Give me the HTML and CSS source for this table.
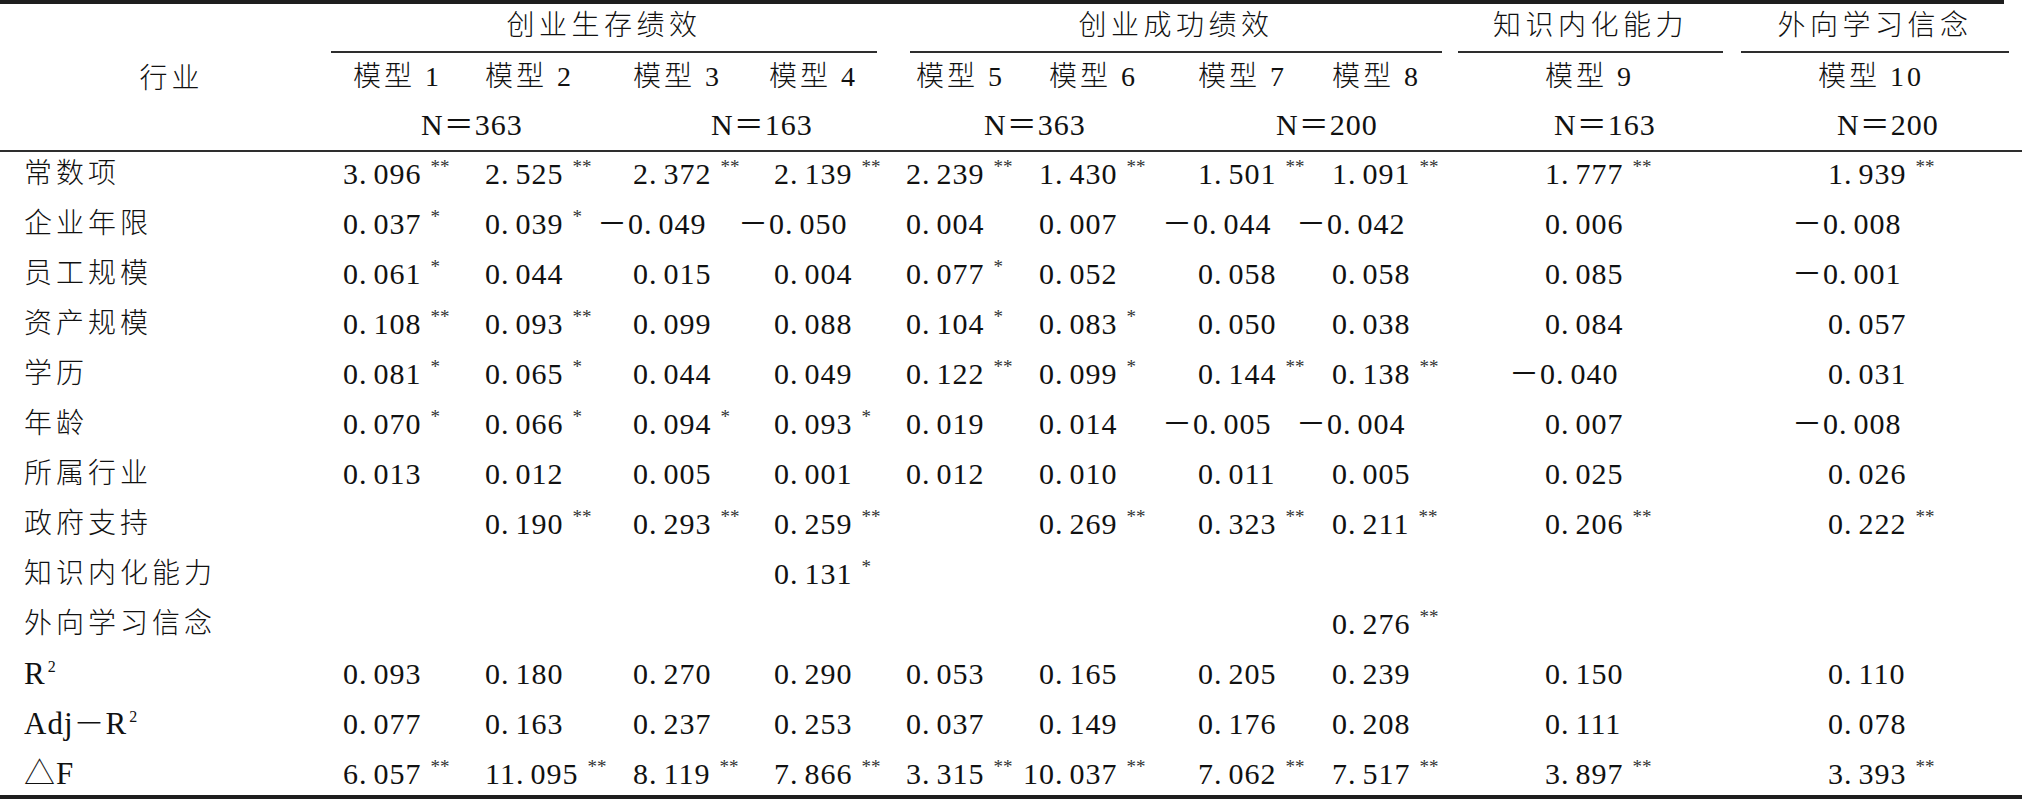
FILE: index.html
```html
<!DOCTYPE html>
<html lang="zh-CN">
<head>
<meta charset="utf-8">
<title>回归分析结果</title>
<link rel="stylesheet" href="styles.css">
</head>
<body>
<div class="sheet">
<table class="reg">
  <colgroup>
    <col class="w-lab"><col class="w1"><col class="w2"><col class="w3"><col class="w4"><col class="w5"><col class="w6"><col class="w7"><col class="w8"><col class="w9"><col class="w10">
  </colgroup>
  <thead>
    <tr class="r-grp">
      <th rowspan="3" class="head-lab">行业</th>
      <th colspan="4"><div class="gl g1">创业生存绩效</div></th>
      <th colspan="4"><div class="gl g2">创业成功绩效</div></th>
      <th><div class="gl g3">知识内化能力</div></th>
      <th><div class="gl g4">外向学习信念</div></th>
    </tr>
    <tr class="r-mdl">
      <th class="in-r">模型 1</th>
      <th>模型 2</th>
      <th>模型 3</th>
      <th class="in-l5">模型 4</th>
      <th class="in-r">模型 5</th>
      <th class="in-r">模型 6</th>
      <th>模型 7</th>
      <th>模型 8</th>
      <th>模型 9</th>
      <th class="in-l">模型 10</th>
    </tr>
    <tr class="r-n">
      <th colspan="2" class="n2">N＝363</th>
      <th colspan="2" class="n2">N＝163</th>
      <th colspan="2" class="n2">N＝363</th>
      <th colspan="2" class="n2">N＝200</th>
      <th class="n1">N＝163</th>
      <th class="n1">N＝200</th>
    </tr>
  </thead>
  <tbody>
    <tr>
      <td class="lab">常数项</td>
      <td>3<span class="dp">.</span>096<sup>**</sup></td><td>2<span class="dp">.</span>525<sup>**</sup></td><td>2<span class="dp">.</span>372<sup>**</sup></td><td>2<span class="dp">.</span>139<sup>**</sup></td>
      <td>2<span class="dp">.</span>239<sup>**</sup></td><td>1<span class="dp">.</span>430<sup>**</sup></td><td>1<span class="dp">.</span>501<sup>**</sup></td><td>1<span class="dp">.</span>091<sup>**</sup></td>
      <td>1<span class="dp">.</span>777<sup>**</sup></td><td>1<span class="dp">.</span>939<sup>**</sup></td>
    </tr>
    <tr>
      <td class="lab">企业年限</td>
      <td>0<span class="dp">.</span>037<sup>*</sup></td><td>0<span class="dp">.</span>039<sup>*</sup></td><td class="neg">－0<span class="dp">.</span>049</td><td class="neg">－0<span class="dp">.</span>050</td>
      <td>0<span class="dp">.</span>004</td><td>0<span class="dp">.</span>007</td><td class="neg">－0<span class="dp">.</span>044</td><td class="neg">－0<span class="dp">.</span>042</td>
      <td>0<span class="dp">.</span>006</td><td class="neg">－0<span class="dp">.</span>008</td>
    </tr>
    <tr>
      <td class="lab">员工规模</td>
      <td>0<span class="dp">.</span>061<sup>*</sup></td><td>0<span class="dp">.</span>044</td><td>0<span class="dp">.</span>015</td><td>0<span class="dp">.</span>004</td>
      <td>0<span class="dp">.</span>077<sup>*</sup></td><td>0<span class="dp">.</span>052</td><td>0<span class="dp">.</span>058</td><td>0<span class="dp">.</span>058</td>
      <td>0<span class="dp">.</span>085</td><td class="neg">－0<span class="dp">.</span>001</td>
    </tr>
    <tr>
      <td class="lab">资产规模</td>
      <td>0<span class="dp">.</span>108<sup>**</sup></td><td>0<span class="dp">.</span>093<sup>**</sup></td><td>0<span class="dp">.</span>099</td><td>0<span class="dp">.</span>088</td>
      <td>0<span class="dp">.</span>104<sup>*</sup></td><td>0<span class="dp">.</span>083<sup>*</sup></td><td>0<span class="dp">.</span>050</td><td>0<span class="dp">.</span>038</td>
      <td>0<span class="dp">.</span>084</td><td>0<span class="dp">.</span>057</td>
    </tr>
    <tr>
      <td class="lab">学历</td>
      <td>0<span class="dp">.</span>081<sup>*</sup></td><td>0<span class="dp">.</span>065<sup>*</sup></td><td>0<span class="dp">.</span>044</td><td>0<span class="dp">.</span>049</td>
      <td>0<span class="dp">.</span>122<sup>**</sup></td><td>0<span class="dp">.</span>099<sup>*</sup></td><td>0<span class="dp">.</span>144<sup>**</sup></td><td>0<span class="dp">.</span>138<sup>**</sup></td>
      <td class="neg">－0<span class="dp">.</span>040</td><td>0<span class="dp">.</span>031</td>
    </tr>
    <tr>
      <td class="lab">年龄</td>
      <td>0<span class="dp">.</span>070<sup>*</sup></td><td>0<span class="dp">.</span>066<sup>*</sup></td><td>0<span class="dp">.</span>094<sup>*</sup></td><td>0<span class="dp">.</span>093<sup>*</sup></td>
      <td>0<span class="dp">.</span>019</td><td>0<span class="dp">.</span>014</td><td class="neg">－0<span class="dp">.</span>005</td><td class="neg">－0<span class="dp">.</span>004</td>
      <td>0<span class="dp">.</span>007</td><td class="neg">－0<span class="dp">.</span>008</td>
    </tr>
    <tr>
      <td class="lab">所属行业</td>
      <td>0<span class="dp">.</span>013</td><td>0<span class="dp">.</span>012</td><td>0<span class="dp">.</span>005</td><td>0<span class="dp">.</span>001</td>
      <td>0<span class="dp">.</span>012</td><td>0<span class="dp">.</span>010</td><td>0<span class="dp">.</span>011</td><td>0<span class="dp">.</span>005</td>
      <td>0<span class="dp">.</span>025</td><td>0<span class="dp">.</span>026</td>
    </tr>
    <tr>
      <td class="lab">政府支持</td>
      <td></td><td>0<span class="dp">.</span>190<sup>**</sup></td><td>0<span class="dp">.</span>293<sup>**</sup></td><td>0<span class="dp">.</span>259<sup>**</sup></td>
      <td></td><td>0<span class="dp">.</span>269<sup>**</sup></td><td>0<span class="dp">.</span>323<sup>**</sup></td><td>0<span class="dp">.</span>211<sup>**</sup></td>
      <td>0<span class="dp">.</span>206<sup>**</sup></td><td>0<span class="dp">.</span>222<sup>**</sup></td>
    </tr>
    <tr>
      <td class="lab">知识内化能力</td>
      <td></td><td></td><td></td><td>0<span class="dp">.</span>131<sup>*</sup></td>
      <td></td><td></td><td></td><td></td>
      <td></td><td></td>
    </tr>
    <tr>
      <td class="lab">外向学习信念</td>
      <td></td><td></td><td></td><td></td>
      <td></td><td></td><td></td><td>0<span class="dp">.</span>276<sup>**</sup></td>
      <td></td><td></td>
    </tr>
    <tr>
      <td class="lab lat">R<sup class="pw">2</sup></td>
      <td>0<span class="dp">.</span>093</td><td>0<span class="dp">.</span>180</td><td>0<span class="dp">.</span>270</td><td>0<span class="dp">.</span>290</td>
      <td>0<span class="dp">.</span>053</td><td>0<span class="dp">.</span>165</td><td>0<span class="dp">.</span>205</td><td>0<span class="dp">.</span>239</td>
      <td>0<span class="dp">.</span>150</td><td>0<span class="dp">.</span>110</td>
    </tr>
    <tr>
      <td class="lab lat">Adj－R<sup class="pw">2</sup></td>
      <td>0<span class="dp">.</span>077</td><td>0<span class="dp">.</span>163</td><td>0<span class="dp">.</span>237</td><td>0<span class="dp">.</span>253</td>
      <td>0<span class="dp">.</span>037</td><td>0<span class="dp">.</span>149</td><td>0<span class="dp">.</span>176</td><td>0<span class="dp">.</span>208</td>
      <td>0<span class="dp">.</span>111</td><td>0<span class="dp">.</span>078</td>
    </tr>
    <tr>
      <td class="lab lat">△F</td>
      <td>6<span class="dp">.</span>057<sup>**</sup></td><td>11<span class="dp">.</span>095<sup>**</sup></td><td>8<span class="dp">.</span>119<sup>**</sup></td><td>7<span class="dp">.</span>866<sup>**</sup></td>
      <td>3<span class="dp">.</span>315<sup>**</sup></td><td class="wide">10<span class="dp">.</span>037<sup>**</sup></td><td>7<span class="dp">.</span>062<sup>**</sup></td><td>7<span class="dp">.</span>517<sup>**</sup></td>
      <td>3<span class="dp">.</span>897<sup>**</sup></td><td>3<span class="dp">.</span>393<sup>**</sup></td>
    </tr>
  </tbody>
</table>
</div>
</body>
</html>
```

FILE: styles.css
```css
html, body {
  margin: 0;
  padding: 0;
  background: #ffffff;
}

body {
  width: 2022px;
  height: 799px;
  overflow: hidden;
  color: #111111;
  font-family: "Liberation Serif", "Noto Sans CJK SC", serif;
}

.sheet {
  padding-top: 4px;
  background: linear-gradient(#1e1e1e, #1e1e1e) no-repeat 0 0 / 2004px 4px;
}

.reg {
  table-layout: fixed;
  width: 2022px;
  border-collapse: separate;
  border-spacing: 0;
  border-bottom: 4px solid #1e1e1e;
  font-size: 30px;
  letter-spacing: 1px;
}

.w-lab { width: 343px; }
.w1 { width: 142px; }
.w2 { width: 148px; }
.w3 { width: 141px; }
.w4 { width: 132px; }
.w5 { width: 133px; }
.w6 { width: 159px; }
.w7 { width: 134px; }
.w8 { width: 213px; }
.w9 { width: 283px; }
.w10 { width: 194px; }

.reg th,
.reg td {
  padding: 0;
  text-align: left;
  font-weight: normal;
  white-space: nowrap;
  vertical-align: top;
}

/* header */
.reg th.head-lab {
  vertical-align: middle;
  text-align: center;
  font-size: 28px;
  font-weight: 300;
  letter-spacing: 4px;
  line-height: 44px;
  padding-bottom: 0;
  padding-top: 4px;
}

.gl {
  text-align: center;
  font-size: 28px;
  font-weight: 300;
  letter-spacing: 4.5px;
  line-height: 44px;
  padding-bottom: 3px;
  border-bottom: 2px solid #2e2e2e;
}

.g1 { margin: 0 29px 0 -12px; }
.g2 { margin: 0 103px 0 4px; }
.g3 { margin: 0 105px 0 -87px; }
.g4 { margin: 0 13px 0 -87px; }

.reg .r-mdl th {
  font-size: 28px;
  font-weight: 300;
  letter-spacing: 3px;
  line-height: 47px;
}

.reg th.in-r { text-indent: 10px; }
.reg th.in-l { text-indent: -10px; }
.reg th.in-l5 { text-indent: -5px; }

.r-n th {
  line-height: 50px;
}

.reg th.n2 { padding-left: 78px; }
.reg th.n1 { padding-left: 9px; }

/* body */
.reg tbody td {
  line-height: 44px;
  padding-bottom: 6px;
}

.reg tbody tr:first-child td {
  border-top: 2px solid #2e2e2e;
}

.reg tbody tr:last-child td {
  line-height: 43px;
  padding-bottom: 0;
}

.reg td.lab {
  padding-left: 24px;
  font-size: 28px;
  font-weight: 300;
  letter-spacing: 4px;
}

.reg td.lat {
  font-size: 31px;
  letter-spacing: 1px;
}

.reg td.neg { text-indent: -36px; }
.reg td.wide { text-indent: -16px; }

.dp {
  margin-right: 6px;
}

.reg sup {
  font-size: 19px;
  line-height: 0;
  vertical-align: 11px;
  margin-left: 9px;
  letter-spacing: 0;
  color: #333333;
}

.reg sup.pw {
  font-size: 16px;
  vertical-align: 12px;
  margin-left: 2px;
  color: #111111;
}
```
